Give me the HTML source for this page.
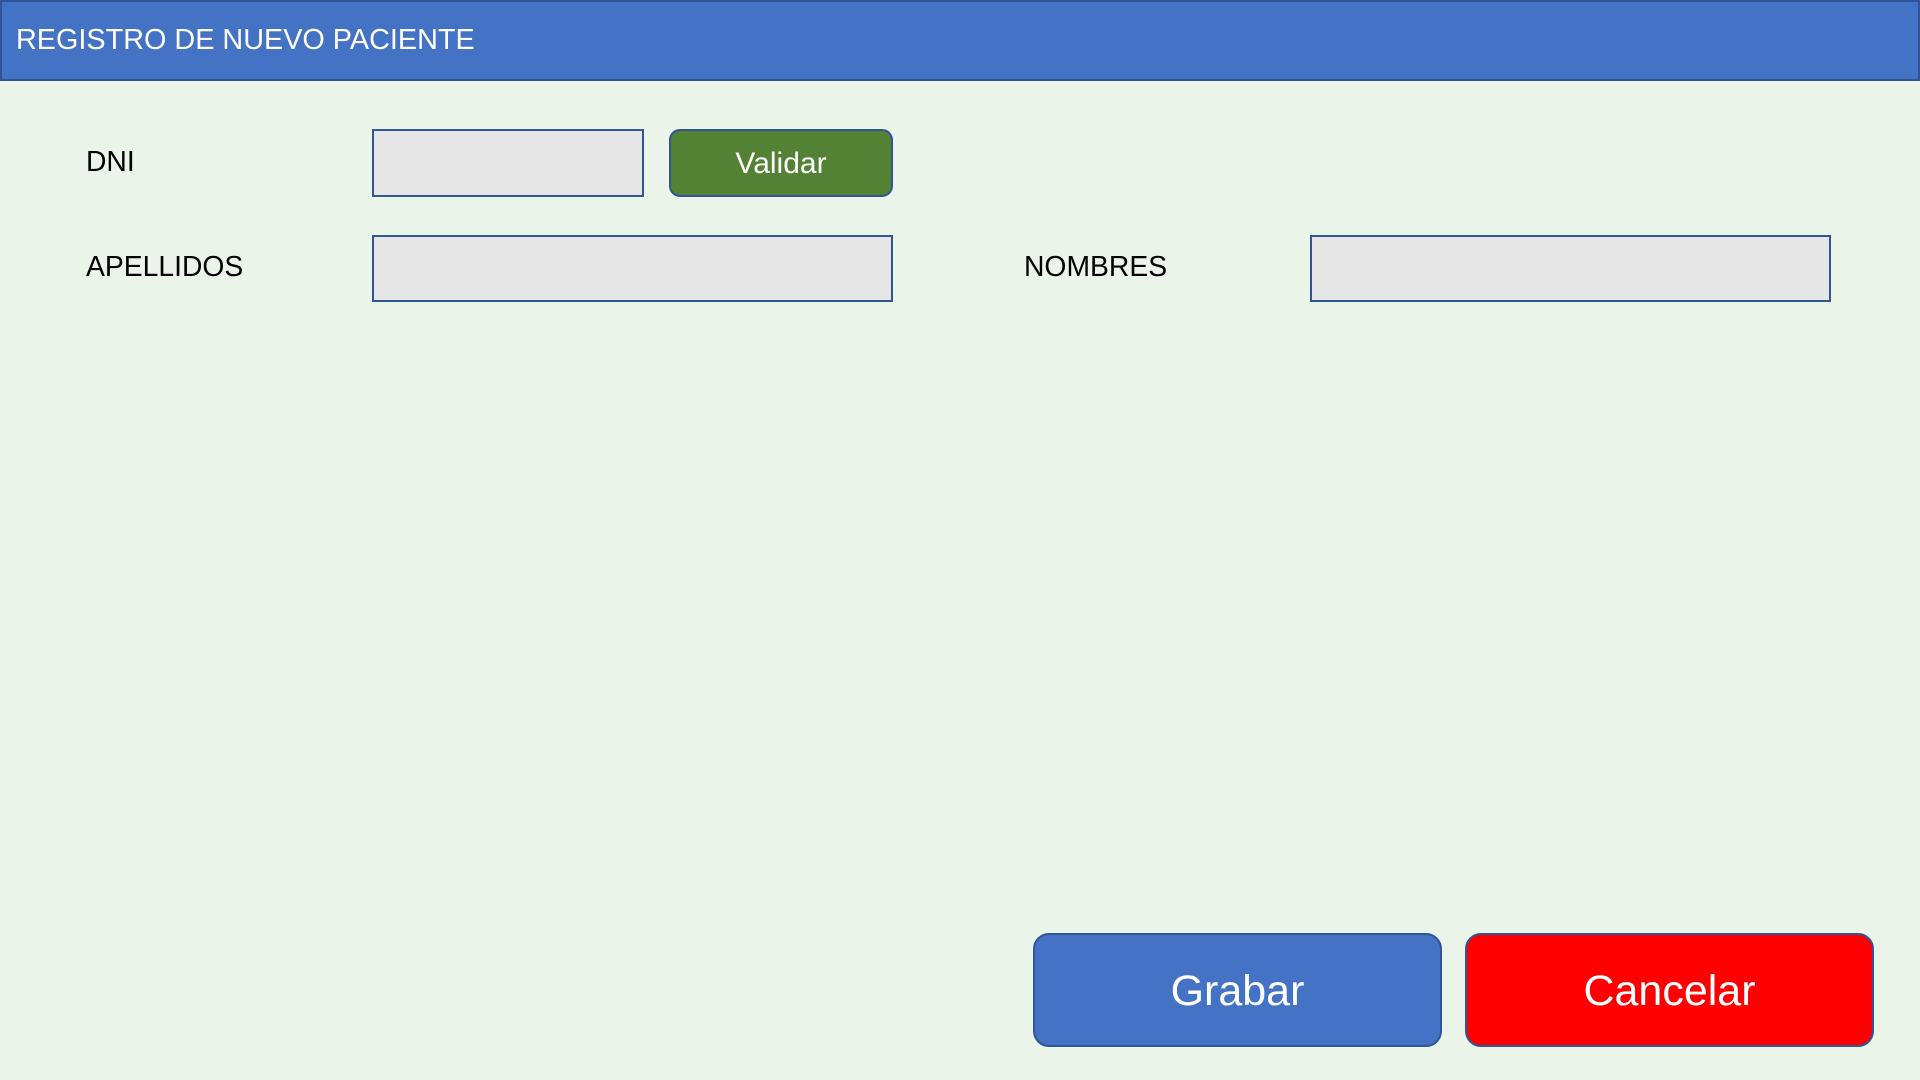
<!DOCTYPE html>
<html><head><meta charset="utf-8"><style>
html,body{margin:0;padding:0;}
body{width:1920px;height:1080px;background:#EBF4E9;position:relative;overflow:hidden;font-family:"Liberation Sans",sans-serif;}
.hdr{position:absolute;left:0;top:0;width:1916px;height:77px;background:#4472C4;border:2px solid #2F5597;}
.hdr span{position:absolute;left:14px;top:22px;color:#fff;font-size:28.8px;}
.lbl{position:absolute;font-size:28.3px;color:#000;}
.in{position:absolute;background:#E6E6E6;border:2px solid #2F5597;box-sizing:border-box;}
.btn{position:absolute;box-sizing:border-box;border:2px solid #2F5597;color:#fff;display:flex;align-items:center;justify-content:center;}
</style></head><body>
<div class="hdr"><span>REGISTRO DE NUEVO PACIENTE</span></div>
<div class="lbl" style="left:86px;top:145px;">DNI</div>
<div class="in" style="left:372px;top:129px;width:272px;height:68px;"></div>
<div class="btn" style="left:669px;top:129px;width:224px;height:68px;background:#548235;border-radius:11px;font-size:30px;padding-top:2px;">Validar</div>
<div class="lbl" style="left:86px;top:250px;">APELLIDOS</div>
<div class="in" style="left:372px;top:235px;width:521px;height:67px;"></div>
<div class="lbl" style="left:1024px;top:250px;">NOMBRES</div>
<div class="in" style="left:1310px;top:235px;width:521px;height:67px;"></div>
<div class="btn" style="left:1033px;top:933px;width:409px;height:114px;background:#4472C4;border-radius:16px;font-size:43px;padding-top:2px;">Grabar</div>
<div class="btn" style="left:1465px;top:933px;width:409px;height:114px;background:#FF0000;border-radius:16px;font-size:43px;padding-top:2px;">Cancelar</div>
</body></html>
